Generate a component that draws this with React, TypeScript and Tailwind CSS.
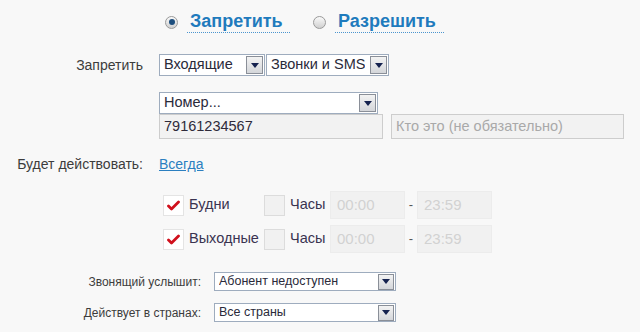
import React from "react";

const FONT = { fontFamily: '"Liberation Sans", Arial, sans-serif' };

function Arrow({ small }: { small?: boolean }) {
  return (
    <span
      className={`flex shrink-0 items-center justify-center border border-[#8a8f98] bg-gradient-to-b from-[#f3f3f3] to-[#d4d6da] ${
        small ? "h-[16px] w-[16px]" : "h-[18px] w-[17px]"
      }`}
    >
      <svg width="8" height="5" viewBox="0 0 8 5">
        <path d="M0 0h8L4 5z" fill="#15224f" />
      </svg>
    </span>
  );
}

function Select({ value, width, small }: { value: string; width: number; small?: boolean }) {
  return (
    <div
      className={`flex items-center justify-between border border-[#9eacbe] bg-white pl-[4px] pr-[1px] text-[#2a2a3a] ${
        small ? "h-[19px] text-[12.5px]" : "h-[22px] text-[14.5px]"
      }`}
      style={{ width }}
    >
      <span className="truncate">{value}</span>
      <Arrow small={small} />
    </div>
  );
}

function Radio({ checked, label, w }: { checked?: boolean; label: string; w: number }) {
  return (
    <div className="flex items-center">
      <span className="flex h-[13px] w-[13px] items-center justify-center rounded-full border border-[#9a9a9a] bg-gradient-to-b from-[#fafafa] to-[#d0d0d0]">
        {checked && <span className="h-[6px] w-[6px] rounded-full bg-[#1d4e7e]" />}
      </span>
      <span
        className="ml-[9px] border-b border-dotted border-[#4b95cf] pl-[3px] text-[18px] font-bold leading-[21px] text-[#1f7bbd]"
        style={{ width: w }}
      >
        {label}
      </span>
    </div>
  );
}

function Check({ checked }: { checked?: boolean }) {
  return (
    <span className="flex h-[21px] w-[21px] shrink-0 items-center justify-center border border-[#e4e4e4] bg-white">
      {checked && (
        <svg width="13" height="11" viewBox="0 0 13 11">
          <path d="M1.5 6l3 3L11.5 2" stroke="#d0101c" strokeWidth="2.8" fill="none" strokeLinecap="round" strokeLinejoin="round" />
        </svg>
      )}
    </span>
  );
}

function TimeRow({ label }: { label: string }) {
  return (
    <div className="ml-[163px] flex h-[28px] items-center">
      <Check checked />
      <span className="ml-[5px] w-[75px] text-[14.5px] text-[#3a3350]">{label}</span>
      <span className="h-[21px] w-[21px] shrink-0 border border-[#dcdcdc] bg-[#f1f1f1]" />
      <span className="ml-[5px] w-[40px] text-[14.5px] text-[#3a3350]">Часы</span>
      <span className="flex h-[28px] w-[75px] items-center border border-[#ececec] bg-[#f1f1f1] pl-[6px] text-[15px] text-[#d2d2d2]">00:00</span>
      <span className="w-[12px] text-center text-[13px] text-[#555]">-</span>
      <span className="flex h-[28px] w-[75px] items-center border border-[#ececec] bg-[#f1f1f1] pl-[6px] text-[15px] text-[#d2d2d2]">23:59</span>
    </div>
  );
}

export default function App() {
  return (
    <div className="h-[332px] w-[640px] overflow-hidden bg-[#f8f8f8]" style={FONT}>
      <div className="pt-[8px]">
        <div className="flex h-[28px] items-center">
          <div className="ml-[165px]">
            <Radio checked label="Запретить" w={103} />
          </div>
          <div className="ml-[23px]">
            <Radio label="Разрешить" w={109} />
          </div>
        </div>

        <div className="mt-[18px] flex h-[22px] items-center">
          <span className="w-[143px] text-right text-[14px] text-[#3c3c3c]">Запретить</span>
          <div className="ml-[16px] flex gap-[1px]">
            <Select value="Входящие" width={106} />
            <Select value="Звонки и SMS" width={123} />
          </div>
        </div>

        <div className="ml-[159px] mt-[16px]">
          <Select value="Номер..." width={219} />
          <div className="flex gap-[8px]">
            <div className="flex h-[25px] w-[224px] items-center border border-[#cdcdcd] bg-[#f2f2f2] pl-[4px] text-[14.5px] text-[#2e2a3a]">
              79161234567
            </div>
            <div className="flex h-[25px] w-[233px] items-center border border-[#cdcdcd] bg-[#f2f2f2] pl-[4px] text-[14.5px] text-[#a9a9a9]">
              Кто это (не обязательно)
            </div>
          </div>
        </div>

        <div className="mt-[15px] flex h-[20px] items-center">
          <span className="w-[143px] text-right text-[14px] text-[#3c3c3c]">Будет действовать:</span>
          <a className="ml-[16px] text-[14px] text-[#2b7fc0] underline">Всегда</a>
        </div>

        <div className="mt-[17px]">
          <TimeRow label="Будни" />
        </div>
        <div className="mt-[6px]">
          <TimeRow label="Выходные" />
        </div>

        <div className="mt-[19px] flex h-[19px] items-center">
          <span className="w-[201px] text-right text-[12px] text-[#3c3c3c]">Звонящий услышит:</span>
          <div className="ml-[13px]">
            <Select value="Абонент недоступен" width={182} small />
          </div>
        </div>
        <div className="mt-[12px] flex h-[19px] items-center">
          <span className="w-[201px] text-right text-[12px] text-[#3c3c3c]">Действует в странах:</span>
          <div className="ml-[13px]">
            <Select value="Все страны" width={182} small />
          </div>
        </div>
      </div>
    </div>
  );
}
